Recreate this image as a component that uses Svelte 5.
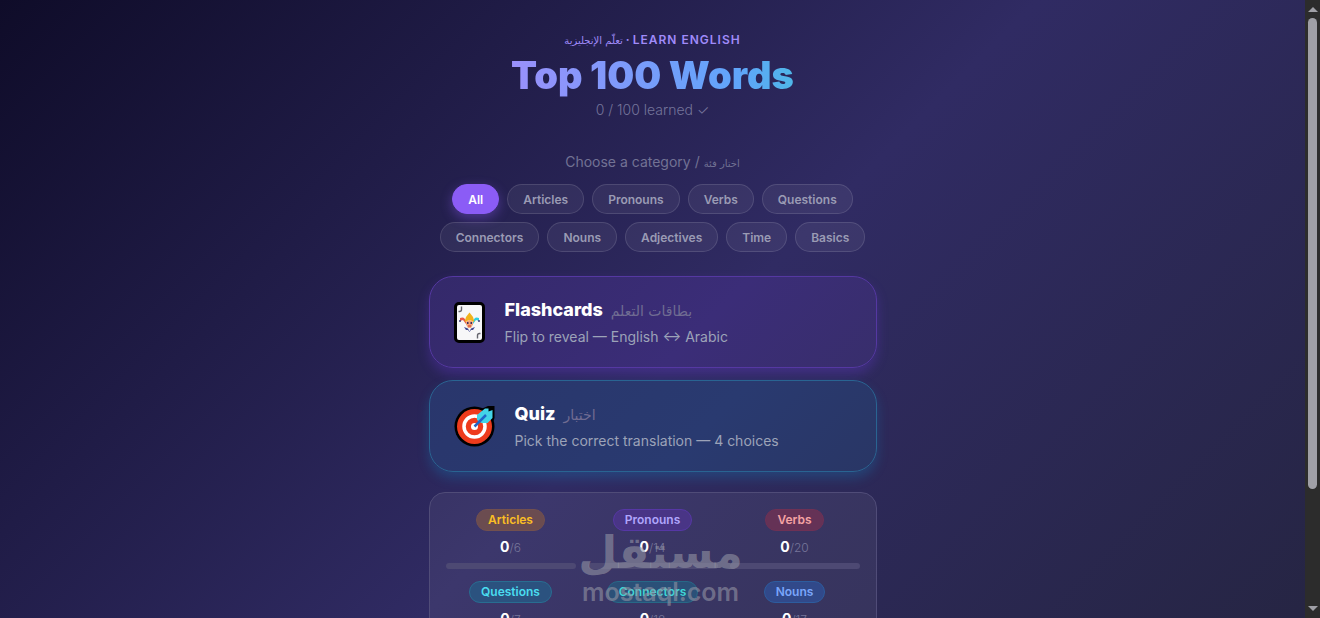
<script>
  const categories = [
    "All",
    "Articles",
    "Pronouns",
    "Verbs",
    "Questions",
    "Connectors",
    "Nouns",
    "Adjectives",
    "Time",
    "Basics"
  ];

  const stats = [
    { name: "Articles", tone: "amber", learned: 0, total: 6 },
    { name: "Pronouns", tone: "violet", learned: 0, total: 14 },
    { name: "Verbs", tone: "red", learned: 0, total: 20 },
    { name: "Questions", tone: "cyan", learned: 0, total: 7 },
    { name: "Connectors", tone: "teal", learned: 0, total: 18 },
    { name: "Nouns", tone: "blue", learned: 0, total: 17 }
  ];

  let selected = $state("All");
</script>

<div class="window">
  <main class="page">
    <div class="container">
      <header>
        <p class="eyebrow"><span class="ar" lang="ar">تعلّم الإنجليزية</span> · LEARN ENGLISH</p>
        <h1>Top 100 Words</h1>
        <p class="learned">0 / 100 learned ✓</p>
      </header>

      <p class="choose">Choose a category / <span class="ar" lang="ar">اختار فئة</span></p>
      <div class="pills">
        {#each categories as category}
          <button
            class="pill"
            class:active={selected === category}
            onclick={() => (selected = category)}>
            {category}
          </button>
        {/each}
      </div>

      <div class="modes">
        <button class="mode flashcards">
          <svg width="31" height="41" viewBox="0 0 31 41" aria-hidden="true">
            <rect x="1.5" y="1.5" width="28" height="38" rx="3.500" fill="#f7f7f8" stroke="#000" stroke-width="3" />
            <path d="M7.500 4.500v3q0 2-2 2H4.500M23.500 36.500v-3q0-2 2-2H26.500" fill="none" stroke="#66666e" stroke-width="1.400" />
            <path d="M12 20q-1-6-6-4v3l3-1 3 4z" fill="#ea5a47" />
            <path d="M19 20q1-6 6-4v3l-3-1-3 4z" fill="#2fcfe0" />
            <path d="M10.500 20l1.500-5 3.500-4.500 3.500 4.500 1.500 5-5-2z" fill="#f1b31c" />
            <circle cx="6" cy="19" r="1" fill="#3d3d78" />
            <circle cx="25" cy="19" r="1" fill="#3d3d78" />
            <path d="M12 19.500l3.500-1.500 3.500 1.500v3L17 26h-3l-2-3.500z" fill="#f3a77b" />
            <path d="M13 20h1.500v2H13zM16.500 20H18v2h-1.500z" fill="#3d2a5f" />
            <path d="M14 23.500h3v1h-3z" fill="#d22f27" />
            <path d="M10 25l4 1.500 1.500 3 1.500-3 4-1.500-2 3-2 0-1.500 2-1.500-2-2 0z" fill="#454a91" />
          </svg>
          <span class="mode-text">
            <span class="mode-title">Flashcards <span class="ar" lang="ar">بطاقات التعلم</span></span>
            <span class="mode-note">Flip to reveal — English ↔ Arabic</span>
          </span>
        </button>

        <button class="mode quiz">
          <svg width="41" height="41" viewBox="0 0 41 41" aria-hidden="true">
            <circle cx="20.500" cy="20.500" r="20" fill="#000" />
            <path d="M25 4l9-4h6.500v12l-3 8z" fill="#000" />
            <circle cx="20.500" cy="20.500" r="17.500" fill="#ee3b1c" />
            <circle cx="20.500" cy="20.500" r="10.500" fill="none" stroke="#fff" stroke-width="3.500" />
            <circle cx="20.500" cy="20.500" r="3.500" fill="#fff" />
            <path d="M23 12V9l8-6.500h3.500v3l4-1.500v8l-5 5h-6l-4.500-3z" fill="#43d4e8" />
            <path d="M20.500 20.500L32 9" fill="none" stroke="#2166c8" stroke-width="2.500" />
          </svg>
          <span class="mode-text">
            <span class="mode-title">Quiz <span class="ar" lang="ar">اختبار</span></span>
            <span class="mode-note">Pick the correct translation — 4 choices</span>
          </span>
        </button>
      </div>

      <section class="stats">
        {#each stats as stat}
          <div class="stat">
            <span class="badge {stat.tone}">{stat.name}</span>
            <span class="count"><b>{stat.learned}</b>/{stat.total}</span>
            <div class="track">
              <div class="fill" style="width: {(stat.learned / stat.total) * 100}%"></div>
            </div>
          </div>
        {/each}
      </section>
    </div>

    <div class="watermark">
      <span class="wm-ar" lang="ar">مستقل</span>
      <span class="wm-en">mostaql.com</span>
    </div>
  </main>

  <div class="scrollbar" aria-hidden="true">
    <span class="arrow up"></span>
    <span class="thumb"></span>
    <span class="arrow down"></span>
  </div>
</div>

<style>
  :global(body) {
    margin: 0;
    background: #24243e;
    overflow: hidden;
  }

  .window {
    display: flex;
    height: 100vh;
    overflow: hidden;
    font-family: Inter, "DejaVu Sans", sans-serif;
    color: #fff;
  }

  .page {
    position: relative;
    flex: 1;
    min-width: 0;
    overflow: hidden;
    background: linear-gradient(135deg, #0f0c29 0%, #302b63 54%, #24243e 108%);
  }

  .container {
    box-sizing: border-box;
    max-width: 480px;
    margin: 0 auto;
    padding: 32px 16px;
  }

  .ar {
    font-family: "DejaVu Sans", sans-serif;
  }

  header {
    text-align: center;
    margin-bottom: 32px;
  }

  p,
  h1 {
    margin: 0;
  }

  .eyebrow {
    font-size: 12px;
    line-height: 16px;
    font-weight: 600;
    letter-spacing: 1px;
    color: #a08bfa;
  }

  .eyebrow .ar {
    font-size: 10px;
    font-weight: 400;
    letter-spacing: 0;
  }

  h1 {
    width: fit-content;
    margin: 4px auto;
    font-size: 38px;
    line-height: 44px;
    font-weight: 900;
    background: linear-gradient(90deg, #9a90fb, #60a5fa 80%, #4fb6e8);
    background-clip: text;
    -webkit-background-clip: text;
    color: transparent;
  }

  .learned {
    font-size: 14px;
    line-height: 18px;
    font-weight: 300;
    color: #74749a;
  }

  .choose {
    text-align: center;
    font-size: 14px;
    line-height: 21px;
    margin-bottom: 10px;
    color: #727294;
  }

  .choose .ar {
    font-size: 10px;
  }

  button {
    font-family: inherit;
    cursor: pointer;
  }

  .pills {
    display: flex;
    flex-wrap: wrap;
    justify-content: center;
    gap: 8px;
    margin-bottom: 24px;
  }

  .pill {
    height: 30px;
    padding: 0 15px;
    border: 1px solid rgba(255, 255, 255, 0.12);
    border-radius: 20px;
    background: rgba(255, 255, 255, 0.06);
    color: #9a9bb4;
    font-size: 12px;
    font-weight: 600;
  }

  .pill.active {
    border-color: #8b5cf6;
    background: #8b5cf6;
    color: #fff;
    box-shadow: 0 4px 12px rgba(139, 92, 246, 0.4);
  }

  .modes {
    display: flex;
    flex-direction: column;
    gap: 12px;
    margin-bottom: 20px;
  }

  .mode {
    display: flex;
    align-items: center;
    gap: 20px;
    height: 92px;
    padding: 0 24px;
    border-radius: 24px;
    text-align: left;
    color: #fff;
  }

  .mode svg {
    flex: none;
  }

  .flashcards {
    border: 1px solid #5538a2;
    background: linear-gradient(135deg, #34296a, #3b2d78 60%, #382e6c);
    box-shadow: 0 6px 12px rgba(109, 60, 220, 0.3);
  }

  .quiz {
    border: 1px solid #296492;
    background: linear-gradient(135deg, #29366c, #293a70 60%, #293665);
    box-shadow: 0 6px 12px rgba(20, 130, 190, 0.3);
  }

  .mode-text {
    display: flex;
    flex-direction: column;
    gap: 4px;
  }

  .mode-title {
    font-size: 18px;
    line-height: 24px;
    font-weight: 800;
  }

  .mode-title .ar {
    margin-left: 4px;
    font-size: 14px;
    font-weight: 400;
    color: #706c92;
  }

  .mode-note {
    font-size: 14px;
    line-height: 20px;
    color: #9ca3b8;
  }

  .stats {
    display: grid;
    grid-template-columns: repeat(3, 1fr);
    gap: 12px;
    padding: 16px;
    border: 1px solid #504c78;
    border-radius: 16px;
    background: rgba(255, 255, 255, 0.06);
  }

  .stat {
    display: flex;
    flex-direction: column;
    align-items: center;
  }

  .badge {
    padding: 0 11px;
    border: 1px solid transparent;
    border-radius: 20px;
    font-size: 12px;
    line-height: 20px;
    font-weight: 600;
  }

  .amber {
    border-color: #72504f;
    background: #6b4c50;
    color: #fbbf24;
  }

  .violet {
    border-color: #5637a5;
    background: #493586;
    color: #b0a5fc;
  }

  .red {
    border-color: #6e3155;
    background: #653256;
    color: #f5a3a3;
  }

  .cyan {
    border-color: #286d91;
    background: #2b527f;
    color: #4addf0;
  }

  .teal {
    border-color: #276887;
    background: #2b5078;
    color: #3fd6d6;
  }

  .blue {
    border-color: #2d5c9e;
    background: #31498a;
    color: #7aa5fa;
  }

  .count {
    margin: 6px 0 5px;
    font-size: 12px;
    line-height: 20px;
    font-weight: 300;
    color: #77769a;
  }

  .count b {
    font-size: 14px;
    font-weight: 700;
    color: #fff;
  }

  .track {
    width: 100%;
    height: 6px;
    border-radius: 3px;
    background: #4d4973;
    overflow: hidden;
  }

  .fill {
    height: 100%;
    background: #8b5cf6;
  }

  /* site mark laid over the bottom of the page */
  .watermark {
    position: absolute;
    left: 0;
    right: 0;
    bottom: 10px;
    display: flex;
    flex-direction: column;
    align-items: center;
    padding-left: 16px;
    color: rgba(146, 147, 163, 0.62);
    pointer-events: none;
  }

  .wm-ar {
    font-family: "DejaVu Sans", sans-serif;
    font-size: 45px;
    line-height: 46px;
    font-weight: 700;
  }

  .wm-en {
    font-size: 25px;
    line-height: 32px;
    font-weight: 600;
  }

  .scrollbar {
    display: flex;
    flex-direction: column;
    align-items: center;
    width: 15px;
    box-sizing: border-box;
    padding: 7px 0;
    background: #2c2c2c;
  }

  .arrow {
    border: 5px solid transparent;
  }

  .up {
    border-top: 0;
    border-bottom-color: #9f9fa6;
  }

  .down {
    margin-top: auto;
    border-bottom: 0;
    border-top-color: #9f9fa6;
  }

  .thumb {
    width: 9px;
    height: 78%;
    margin-top: 6px;
    border-radius: 5px;
    background: #9f9fa6;
  }
</style>
